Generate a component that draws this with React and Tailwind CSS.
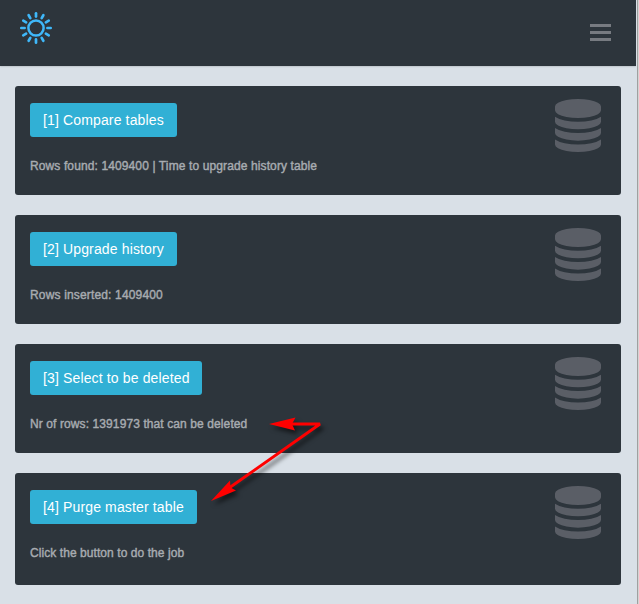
const cards = [
  { button: "[1] Compare tables", note: "Rows found: 1409400 | Time to upgrade history table", box: "h-[109px]", width: "w-[147px]", tracking: "tracking-[0.115px]" },
  { button: "[2] Upgrade history", note: "Rows inserted: 1409400", box: "h-[109px]", width: "w-[147px]", tracking: "tracking-[0.16px]" },
  { button: "[3] Select to be deleted", note: "Nr of rows: 1391973 that can be deleted", box: "h-[109px]", width: "w-[172px]", tracking: "tracking-[0.1px]" },
  { button: "[4] Purge master table", note: "Click the button to do the job", box: "h-[112px]", width: "w-[167px]", tracking: "tracking-[0.07px]" },
];

function Sun() {
  return (
    <svg width="34" height="34" viewBox="-17 -17 34 34" fill="none" stroke="#3fb8fa" strokeLinecap="round">
      <circle r="7.6" strokeWidth="2.5" />
      {Array.from({ length: 12 }, (_, i) => (
        <path key={i} d="M0 -11.4V-14.7" strokeWidth="2.7" transform={`rotate(${i * 30})`} />
      ))}
    </svg>
  );
}

function Database() {
  return (
    <svg className="mt-[13px] h-[53px] w-[46px]" viewBox="0 0 1536 1792" preserveAspectRatio="none" fill="#5a5e66">
      <path d="M768 768q237 0 443-43t325-127v170q0 69-103 128t-280 93.5-385 34.5-385-34.5-280-93.5-103-128v-170q119 84 325 127t443 43zm0 768q237 0 443-43t325-127v170q0 69-103 128t-280 93.5-385 34.5-385-34.5-280-93.5-103-128v-170q119 84 325 127t443 43zm0-384q237 0 443-43t325-127v170q0 69-103 128t-280 93.5-385 34.5-385-34.5-280-93.5-103-128v-170q119 84 325 127t443 43zm0-1152q208 0 385 34.5t280 93.5 103 128v128q0 69-103 128t-280 93.5-385 34.5-385-34.5-280-93.5-103-128v-128q0-69 103-128t280-93.5 385-34.5z" />
    </svg>
  );
}

function Card({ button, note, box, width, tracking }) {
  return (
    <section className={`flex justify-between rounded-[3px] bg-[#2d353c] pr-5 pl-[15px] ${box}`}>
      <div className="pt-[17px]">
        <button className={`block h-[34px] rounded-[3px] bg-[#31b0d5] pl-[13px] text-left text-sm leading-[34px] tracking-[0.14px] whitespace-nowrap text-white ${width}`}>
          {button}
        </button>
        <p className={`mt-5 text-xs leading-[18px] whitespace-nowrap text-[#a8acb1] [-webkit-text-stroke:0.4px_#a8acb1] ${tracking}`}>{note}</p>
      </div>
      <Database />
    </section>
  );
}

function Arrows() {
  return (
    <svg className="pointer-events-none absolute top-[405px] left-[200px] drop-shadow-[3px_4px_2px_rgba(0,0,0,0.55)]" width="140" height="110" viewBox="200 405 140 110" fill="#ff0000">
      <path d="M290 424H320L229 488" fill="none" stroke="#ff0000" strokeWidth="2.8" strokeLinejoin="bevel" />
      <path d="M269 424L295.5 417.5L292 424L295 430.5Z" />
      <path d="M211 501L230 480.5L230.5 487.5L236 490.5Z" />
    </svg>
  );
}

export default function App() {
  return (
    <div className="relative flex h-[604px] w-[639px] overflow-hidden bg-[#d9e0e7] font-['Liberation_Sans',Arial,sans-serif]">
      <div className="w-[636px]">
        <header className="flex h-[66px] justify-between bg-[#2d353c] pt-[11px] pr-[25px] pl-[19px] shadow-[0_0_2px_rgba(0,0,0,0.3)]">
          <Sun />
          <div className="mt-[13px] flex w-[21px] flex-col gap-1">
            <i className="h-[3px] bg-[#777b81]" />
            <i className="h-[3px] bg-[#777b81]" />
            <i className="h-[3px] bg-[#777b81]" />
          </div>
        </header>
        <main className="flex flex-col gap-5 pt-5 pr-[15px] pl-[15px]">
          {cards.map((card) => <Card key={card.button} {...card} />)}
        </main>
      </div>
      <div className="w-px bg-[#d9e0e7]" />
      <div className="w-px bg-[#a0a0a0]" />
      <div className="w-px bg-[#d4d4d4]" />
      <Arrows />
    </div>
  );
}
